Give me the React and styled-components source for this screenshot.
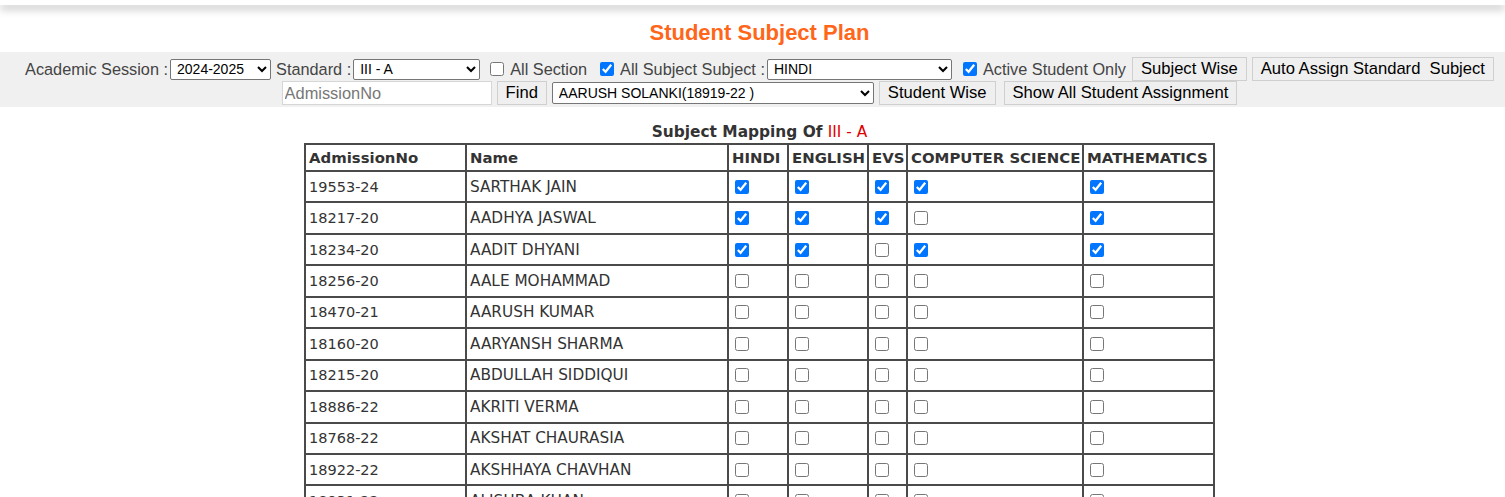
import React from 'react';
import styled, { createGlobalStyle } from 'styled-components';

const GlobalStyle = createGlobalStyle`
  html, body {
    margin: 0;
    padding: 0;
    background: #fff;
    overflow: hidden;
  }
  body {
    font-family: 'Liberation Sans', Arial, sans-serif;
  }
`;

const subjects = ['HINDI', 'ENGLISH', 'EVS', 'COMPUTER SCIENCE', 'MATHEMATICS'];
const colWidths = [161, 262, 60, 80, 39, 176, 131];

const students = [
  { no: '19553-24', name: 'SARTHAK JAIN', marks: [1, 1, 1, 1, 1] },
  { no: '18217-20', name: 'AADHYA JASWAL', marks: [1, 1, 1, 0, 1] },
  { no: '18234-20', name: 'AADIT DHYANI', marks: [1, 1, 0, 1, 1] },
  { no: '18256-20', name: 'AALE MOHAMMAD', marks: [0, 0, 0, 0, 0] },
  { no: '18470-21', name: 'AARUSH KUMAR', marks: [0, 0, 0, 0, 0] },
  { no: '18160-20', name: 'AARYANSH SHARMA', marks: [0, 0, 0, 0, 0] },
  { no: '18215-20', name: 'ABDULLAH SIDDIQUI', marks: [0, 0, 0, 0, 0] },
  { no: '18886-22', name: 'AKRITI VERMA', marks: [0, 0, 0, 0, 0] },
  { no: '18768-22', name: 'AKSHAT CHAURASIA', marks: [0, 0, 0, 0, 0] },
  { no: '18922-22', name: 'AKSHHAYA CHAVHAN', marks: [0, 0, 0, 0, 0] },
  { no: '18931-22', name: 'ALISHBA KHAN', marks: [0, 0, 0, 0, 0] },
];

const App = () => {
  return (
    <Page>
      <GlobalStyle />
      <TopBar />
      <Title>Student Subject Plan</Title>

      <Toolbar>
        <ToolRow>
          <Label>Academic Session :</Label>
          <Select width={101} defaultValue="2024-2025">
            <option>2024-2025</option>
          </Select>
          <Label gap={5}>Standard :</Label>
          <Select width={127} defaultValue="III - A">
            <option>III - A</option>
          </Select>
          <Check gap={10} type="checkbox" />
          <Label>All Section</Label>
          <Check gap={11} type="checkbox" defaultChecked />
          <Label>All Subject Subject :</Label>
          <Select width={185} defaultValue="HINDI">
            <option>HINDI</option>
          </Select>
          <Check gap={11} type="checkbox" defaultChecked />
          <Label>Active Student Only</Label>
          <Button gap={4}>Subject Wise</Button>
          <Button gap={5}>{'Auto Assign Standard  Subject'}</Button>
        </ToolRow>
        <ToolRow>
          <TextInput placeholder="AdmissionNo" />
          <Button gap={5}>Find</Button>
          <Select width={322} tall gap={5} defaultValue="s">
            <option value="s">AARUSH SOLANKI(18919-22 )</option>
          </Select>
          <Button gap={5}>Student Wise</Button>
          <Button gap={8}>Show All Student Assignment</Button>
        </ToolRow>
      </Toolbar>

      <Caption>
        Subject Mapping Of <Red>III - A</Red>
      </Caption>

      <TableWrap>
        <Table>
          <colgroup>
            {colWidths.map((w, i) => (
              <col key={i} style={{ width: w }} />
            ))}
          </colgroup>
          <thead>
            <tr>
              <Th>AdmissionNo</Th>
              <Th>Name</Th>
              {subjects.map(s => (
                <Th key={s}>{s}</Th>
              ))}
            </tr>
          </thead>
          <tbody>
            {students.map(st => (
              <tr key={st.no}>
                <Td size={14.5}>{st.no}</Td>
                <Td size={15.3}>{st.name}</Td>
                {st.marks.map((m, i) => (
                  <Td key={i} box>
                    <CellCheck type="checkbox" defaultChecked={!!m} />
                  </Td>
                ))}
              </tr>
            ))}
          </tbody>
        </Table>
      </TableWrap>
    </Page>
  );
};

const Page = styled.div`
  width: 1519px;
`;

const TopBar = styled.div`
  height: 5px;
  background: #fff;
  box-shadow: 0 4px 9px rgba(0, 0, 0, 0.28);
  width: 1505px;
`;

const Title = styled.h1`
  margin: 0;
  padding-top: 17px;
  height: 30px;
  text-align: center;
  font-family: 'Liberation Sans', Arial, sans-serif;
  font-size: 22px;
  font-weight: bold;
  color: #ff661a;
  line-height: 22px;
`;

const Toolbar = styled.div`
  background: #f0f0f0;
  padding: 5px 0 2px;
  display: flex;
  flex-direction: column;
`;

const ToolRow = styled.div`
  display: flex;
  justify-content: center;
  align-items: center;
  height: 24px;
`;

const Label = styled.span`
  font-size: 16.3px;
  color: #444;
  margin-left: ${p => p.gap || 0}px;
  margin-right: 2px;
  white-space: nowrap;
`;

const Select = styled.select`
  width: ${p => p.width}px;
  height: ${p => (p.tall ? 22 : 21)}px;
  margin-left: ${p => p.gap || 0}px;
  font-family: 'Liberation Sans', Arial, sans-serif;
  font-size: 14px;
  color: #000;
  background: #fff;
  border: 1px solid #767676;
  border-radius: 2px;
  padding: 0 0 0 2px;
`;

const Check = styled.input`
  width: 14px;
  height: 14px;
  margin: 0 6px 0 ${p => p.gap || 0}px;
  accent-color: #0075ff;
`;

const Button = styled.button`
  height: 24px;
  margin-left: ${p => p.gap || 0}px;
  padding: 0 8px;
  font-family: 'Liberation Sans', Arial, sans-serif;
  font-size: 16.6px;
  color: #000;
  background: #efefef;
  border: 1px solid #cfcfcf;
  white-space: pre;
`;

const TextInput = styled.input`
  width: 210px;
  height: 24px;
  box-sizing: border-box;
  padding: 0 2px;
  font-family: 'Liberation Sans', Arial, sans-serif;
  font-size: 16.4px;
  border: 1px solid #d6d6d6;
  background: #fff;
  &::placeholder {
    color: #777;
  }
`;

const Caption = styled.div`
  margin-top: 16px;
  text-align: center;
  font-family: 'DejaVu Sans', Verdana, sans-serif;
  font-size: 15.4px;
  font-weight: bold;
  color: #333;
  height: 20px;
  line-height: 18px;
`;

const Red = styled.span`
  color: #e00000;
  font-weight: normal;
`;

const TableWrap = styled.div`
  display: flex;
  justify-content: center;
`;

const Table = styled.table`
  width: 909px;
  table-layout: fixed;
  border: 1px solid #4a4a4a;
  border-spacing: 0;
  font-family: 'DejaVu Sans', Verdana, sans-serif;
  color: #333;
  tbody tr {
    height: 31.45px;
  }
  thead tr {
    height: 27px;
  }
`;

const Th = styled.th`
  border: 1px solid #4a4a4a;
  padding: 0 1px 0 3px;
  text-align: left;
  font-size: 14.9px;
  font-weight: bold;
  white-space: nowrap;
  overflow: hidden;
`;

const Td = styled.td`
  border: 1px solid #4a4a4a;
  padding: ${p => (p.box ? '0 2px' : '0 3px')};
  font-size: ${p => p.size || 14.5}px;
  white-space: nowrap;
  overflow: hidden;
  vertical-align: middle;
`;

const CellCheck = styled.input`
  width: 14px;
  height: 14px;
  margin: 3px 3px 3px 4px;
  vertical-align: middle;
  accent-color: #0075ff;
`;

export default App;
